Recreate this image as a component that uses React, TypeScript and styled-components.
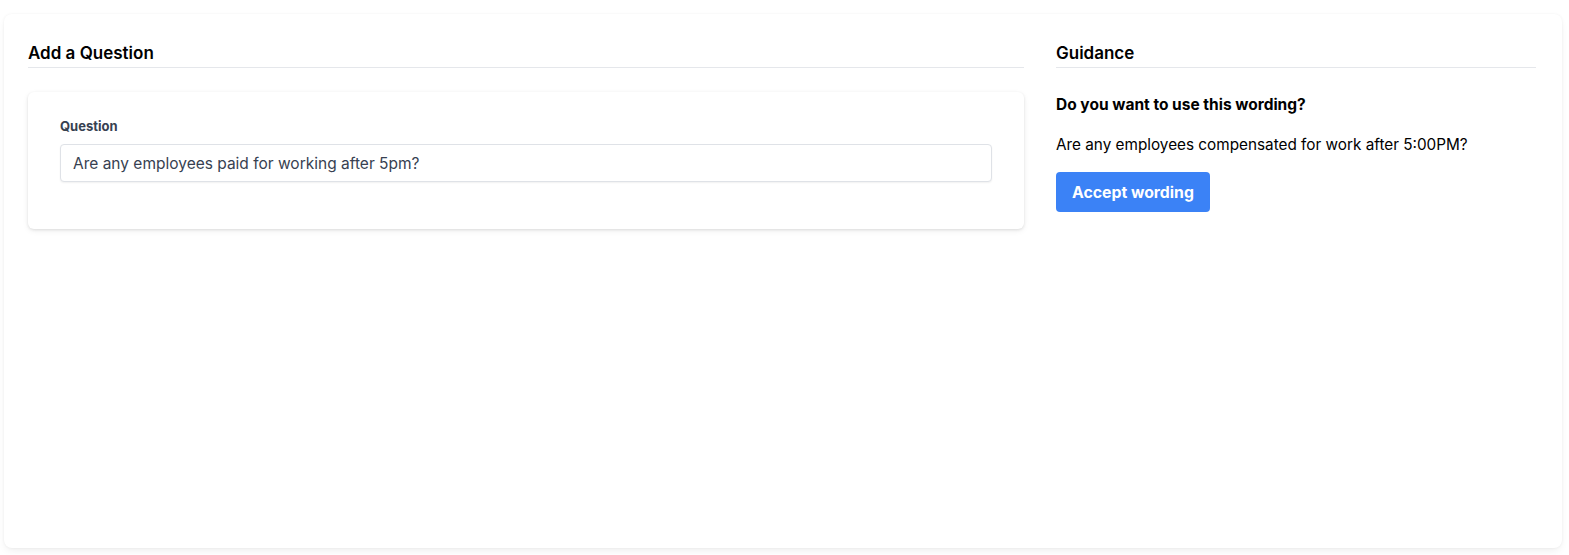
import React from "react";
import styled, { createGlobalStyle } from "styled-components";

const Global = createGlobalStyle`
  html, body { margin: 0; padding: 0; background: #ffffff; }
  body { font-family: Inter, "Noto Sans", "Liberation Sans", sans-serif; color: #000; }
  * { box-sizing: border-box; }
`;

const Page = styled.div`
  padding: 14px 7px 7px 4px;
`;

const Panel = styled.div`
  height: 534px;
  background: #fff;
  border-radius: 8px;
  box-shadow: 0 4px 8px -2px rgba(0, 0, 0, 0.08), 0 0 3px rgba(0, 0, 0, 0.05);
  padding: 24px 26px 24px 24px;
  display: grid;
  grid-template-columns: 996px 1fr;
  column-gap: 32px;
  align-items: start;
`;

const Column = styled.section`
  display: flex;
  flex-direction: column;
`;

const Heading = styled.h2`
  margin: 0;
  font-size: 17px;
  font-weight: 600;
  line-height: 28px;
  padding-top: 1px;
  border-bottom: 1px solid #e5e7eb;
`;

const FormCard = styled.div`
  margin-top: 24px;
  background: #fff;
  border-radius: 6px;
  box-shadow: 0 1px 3px rgba(0, 0, 0, 0.1), 0 2px 6px rgba(0, 0, 0, 0.06);
  padding: 24px 32px 47px 32px;
  display: flex;
  flex-direction: column;
`;

const Label = styled.label`
  font-size: 13px;
  font-weight: 700;
  line-height: 20px;
  color: #374151;
  margin-bottom: 8px;
`;

const Input = styled.input`
  height: 38px;
  width: 100%;
  border: 1px solid #dfe2e7;
  border-radius: 4px;
  box-shadow: 0 1px 2px rgba(0, 0, 0, 0.06);
  padding: 0 12px;
  font-family: inherit;
  font-size: 15.5px;
  color: #374151;
  outline: none;
`;

const Question = styled.p`
  margin: 25px 0 0 0;
  font-size: 15.5px;
  font-weight: 700;
  line-height: 24px;
`;

const Suggestion = styled.p`
  margin: 16px 0 0 0;
  font-size: 15.3px;
  line-height: 24px;
`;

const Button = styled.button`
  margin-top: 15px;
  align-self: flex-start;
  height: 40px;
  padding: 0 16px;
  background: #3b82f6;
  color: #fff;
  border: none;
  border-radius: 4px;
  font-family: inherit;
  font-size: 15.8px;
  font-weight: 700;
  cursor: pointer;
`;

export default function App() {
  return (
    <>
      <Global />
      <Page>
        <Panel>
          <Column>
            <Heading>Add a Question</Heading>
            <FormCard>
              <Label htmlFor="q">Question</Label>
              <Input id="q" defaultValue="Are any employees paid for working after 5pm?" />
            </FormCard>
          </Column>
          <Column>
            <Heading>Guidance</Heading>
            <Question>Do you want to use this wording?</Question>
            <Suggestion>Are any employees compensated for work after 5:00PM?</Suggestion>
            <Button>Accept wording</Button>
          </Column>
        </Panel>
      </Page>
    </>
  );
}
